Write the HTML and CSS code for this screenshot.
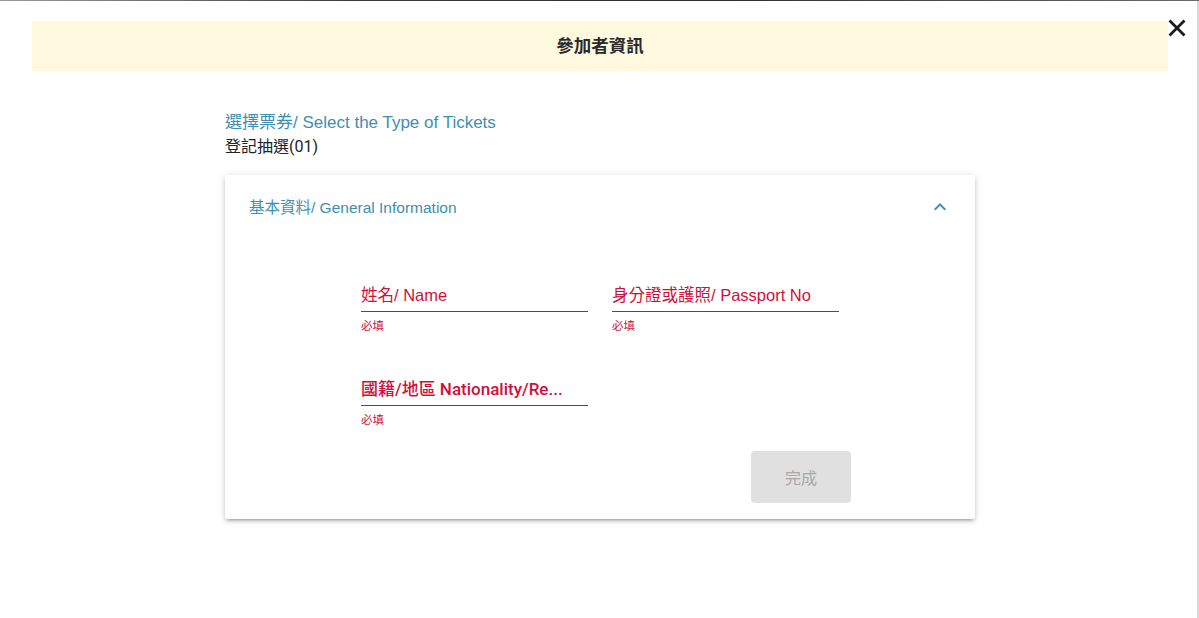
FILE: index.html
```html
<!DOCTYPE html>
<html lang="zh-Hant">
<head>
<meta charset="utf-8">
<title>參加者資訊</title>
<link rel="stylesheet" href="styles.css">
</head>
<body>
<div class="backdrop-line"></div>
<div class="dialog">
  <button class="close" aria-label="close">
    <svg viewBox="0 0 24 24" width="24" height="24"><path d="M4.5 4.5L19.5 19.5M19.5 4.5L4.5 19.5" stroke="#1a1a1a" stroke-width="2.8" fill="none"/></svg>
  </button>
  <div class="title-bar">參加者資訊</div>
  <div class="content">
    <div class="ticket-label">選擇票券/ Select the Type of Tickets</div>
    <div class="ticket-value">登記抽選(01)</div>
    <div class="card">
      <div class="card-header">
        <span class="card-title">基本資料/ General Information</span>
        <svg class="chevron" viewBox="0 0 24 24" width="24" height="24"><path d="M12 8l-6 6 1.41 1.41L12 10.83l4.59 4.58L18 14z" fill="#3e8fb0"/></svg>
      </div>
      <div class="card-body">
        <div class="fields">
          <div class="field">
            <div class="field-label">姓名/ Name</div>
            <div class="field-hint">必填</div>
          </div>
          <div class="field">
            <div class="field-label">身分證或護照/ Passport No</div>
            <div class="field-hint">必填</div>
          </div>
          <div class="field">
            <div class="field-label strong">國籍/地區 Nationality/Re...</div>
            <div class="field-hint">必填</div>
          </div>
        </div>
        <div class="actions">
          <button class="done" disabled>完成</button>
        </div>
      </div>
    </div>
  </div>
</div>
</body>
</html>
```
FILE: styles.css
```css
html, body {
  margin: 0;
  padding: 0;
  background: #ffffff;
}
body {
  font-family: "Liberation Sans", "Noto Sans CJK TC", sans-serif;
  color: #222;
  width: 1199px;
  height: 618px;
  overflow: hidden;
}
.backdrop-line {
  height: 1px;
  background: linear-gradient(90deg, #9a9a9a 0%, #3a3a3a 30%, #2e2e2e 60%, #6a6a6a 100%);
}
.dialog {
  position: relative;
  padding: 20px 29px 0 32px;
  height: 617px;
  box-sizing: border-box;
  border-right: 2px solid #d8d8d8;
}
.close {
  position: absolute;
  top: 15px;
  right: 8px;
  width: 24px;
  height: 24px;
  padding: 0;
  border: 0;
  background: transparent;
  display: flex;
}
.title-bar {
  height: 50px;
  line-height: 50px;
  background: #fef9df;
  text-align: center;
  font-family: Roboto, "Noto Sans CJK TC", sans-serif;
  font-size: 17.5px;
  font-weight: 700;
  color: #2a2a2a;
}
.content {
  width: 750px;
  margin: 40px auto 0;
}
.ticket-label {
  font-size: 17px;
  line-height: 24px;
  color: #3e8fb0;
}
.ticket-value {
  font-family: Roboto, "Noto Sans CJK TC", sans-serif;
  font-size: 16px;
  line-height: 24px;
  color: #222;
}
.card {
  margin-top: 16px;
  background: #fff;
  border-radius: 2px;
  box-shadow: 0 3px 3px -2px rgba(0,0,0,0.25), 0 2px 4px 0 rgba(0,0,0,0.14), 0 1px 8px 0 rgba(0,0,0,0.10);
}
.card-header {
  height: 64px;
  padding: 0 24px;
  display: flex;
  align-items: center;
  justify-content: space-between;
}
.card-title {
  font-size: 15.5px;
  color: #3e8fb0;
  position: relative;
  top: -1px;
}
.chevron {
  margin-right: -1px;
}
.card-body {
  width: 502px;
  margin: 0 auto;
  padding: 44px 0 16px;
}
.fields {
  display: grid;
  grid-template-columns: 227px 227px;
  column-gap: 24px;
  row-gap: 44px;
  padding: 0 12px;
}
.field-label {
  font-size: 16.5px;
  line-height: 24px;
  padding-bottom: 4px;
  color: #d0103a;
  border-bottom: 1px solid #d0103a;
  white-space: nowrap;
}
.field-label.strong {
  font-family: Roboto, "Noto Sans CJK TC", sans-serif;
  font-size: 17px;
  font-weight: 500;
}
.field-hint {
  margin-top: 7px;
  font-size: 11.5px;
  line-height: 14px;
  color: #d0103a;
}
.actions {
  display: flex;
  justify-content: flex-end;
  margin-top: 24px;
}
.done {
  width: 100px;
  height: 52px;
  border: 0;
  border-radius: 4px;
  background: #e0e0e0;
  color: #a8a8a8;
  font-family: Roboto, "Noto Sans CJK TC", sans-serif;
  font-size: 16px;
}
```
